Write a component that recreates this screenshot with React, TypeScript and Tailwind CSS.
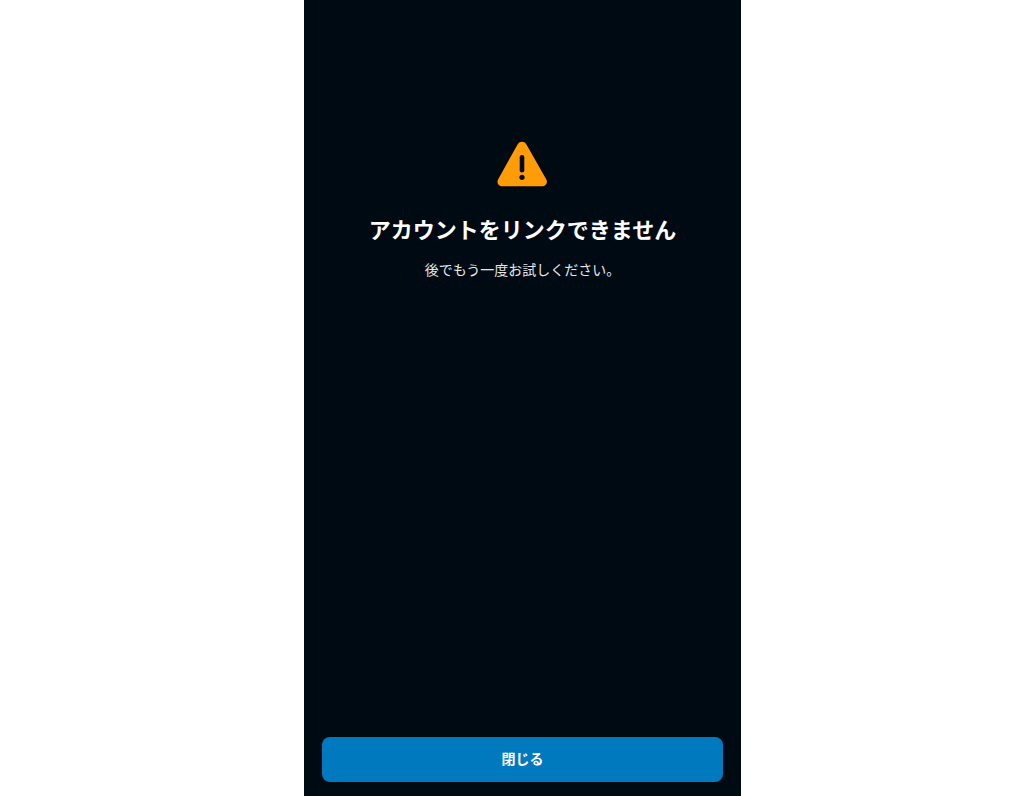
import React from 'react';

export default function App() {
  return (
    <div className="min-h-screen bg-white flex justify-center pl-[21px] font-['Noto_Sans_CJK_JP',sans-serif]">
      <main className="w-full max-w-[437px] min-h-screen bg-[#000a12] flex flex-col px-[18px] pb-[14px] text-white">

        {/* Message */}
        <div className="flex flex-1 flex-col items-center pt-[141px] text-center">
          <svg width="51" height="46" viewBox="0 0 51 46" role="img" aria-label="警告">
            <path
              d="M20.7 3.2C22.6 -0.1 27.4 -0.1 29.3 3.2L49.2 38.2C51.1 41.6 48.9 45.3 45 45.3H5.4C1.5 45.3 -0.7 41.6 1.2 38.2Z"
              fill="#ff9c08"
            />
            <path d="M25 16.3V29.3" stroke="#000a12" strokeWidth="4.6" strokeLinecap="round" />
            <circle cx="25" cy="36.3" r="2.6" fill="#000a12" />
          </svg>
          <h1 className="mt-6 text-[22px] leading-[34px] font-bold">アカウントをリンクできません</h1>
          <p className="mt-3 text-sm leading-6 text-gray-200">後でもう一度お試しください。</p>
        </div>

        {/* Close */}
        <button type="button" className="h-[45px] w-full rounded-lg bg-[#0079bf] pb-1 text-sm font-bold">
          閉じる
        </button>
      </main>
    </div>
  );
}
